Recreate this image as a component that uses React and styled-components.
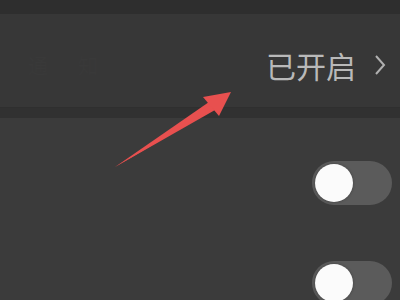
import styled, { createGlobalStyle } from "styled-components";

const Global = createGlobalStyle`
  html, body {
    margin: 0;
    padding: 0;
    background: #3b3b3b;
    font-family: "Noto Sans CJK SC", "Noto Sans", sans-serif;
  }
`;

const Screen = styled.div`
  width: 400px;
  height: 300px;
  overflow: hidden;
  position: relative;
  background: #3b3b3b;
  display: flex;
  flex-direction: column;
`;

const TopStrip = styled.div`
  height: 14px;
  background: #2e2e2e;
  flex-shrink: 0;
`;

const LinkRow = styled.div`
  height: 93px;
  background: #373737;
  border-bottom: 1px solid #2f2f2f;
  display: flex;
  align-items: center;
  justify-content: space-between;
  padding: 0 14px 0 28px;
  flex-shrink: 0;
`;

const FaintLabel = styled.span`
  font-size: 20px;
  color: #393939;
  letter-spacing: 30px;
  padding-top: 10px;
`;

const Status = styled.div`
  display: flex;
  align-items: center;
  gap: 18px;
  padding-top: 8px;
  color: #b9b9b9;
`;

const StatusText = styled.span`
  font-size: 30px;
  letter-spacing: 0;
`;

const Divider = styled.div`
  height: 10px;
  background: #313131;
  flex-shrink: 0;
`;

const Section = styled.div`
  padding-top: 15px;
  display: flex;
  flex-direction: column;
`;

const SwitchRow = styled.div`
  height: 100px;
  display: flex;
  align-items: center;
  justify-content: flex-end;
  padding-right: 8px;
  flex-shrink: 0;
`;

const Track = styled.div`
  width: 80px;
  height: 44px;
  border-radius: 22px;
  background: #5b5b5b;
  display: flex;
  align-items: center;
  padding-left: 3px;
  box-sizing: border-box;
`;

const Knob = styled.div`
  width: 38px;
  height: 38px;
  border-radius: 50%;
  background: #fbfbfb;
  box-shadow: 0 0 3px rgba(0, 0, 0, 0.3);
`;

const Arrow = styled.svg`
  position: absolute;
  left: 0;
  top: 0;
  pointer-events: none;
`;

function Switch() {
  return (
    <Track>
      <Knob />
    </Track>
  );
}

export default function App() {
  return (
    <>
      <Global />
      <Screen>
        <TopStrip />
        <LinkRow>
          <FaintLabel>通知</FaintLabel>
          <Status>
            <StatusText>已开启</StatusText>
            <svg width="12" height="22" viewBox="0 0 12 22">
              <path d="M2 2 L10 11 L2 20" fill="none" stroke="#b0b0b0" strokeWidth="2" />
            </svg>
          </Status>
        </LinkRow>
        <Divider />
        <Section>
          <SwitchRow>
            <Switch />
          </SwitchRow>
          <SwitchRow>
            <Switch />
          </SwitchRow>
        </Section>
        <Arrow width="400" height="300" viewBox="0 0 400 300">
          <path d="M115 167 L212 106 L215 110 Z" fill="#e8504f" />
          <path d="M115 167 L209 102 L214 109 Z" fill="#e8504f" />
          <polygon points="231,92 203,97 219,116" fill="#e8504f" />
        </Arrow>
      </Screen>
    </>
  );
}
